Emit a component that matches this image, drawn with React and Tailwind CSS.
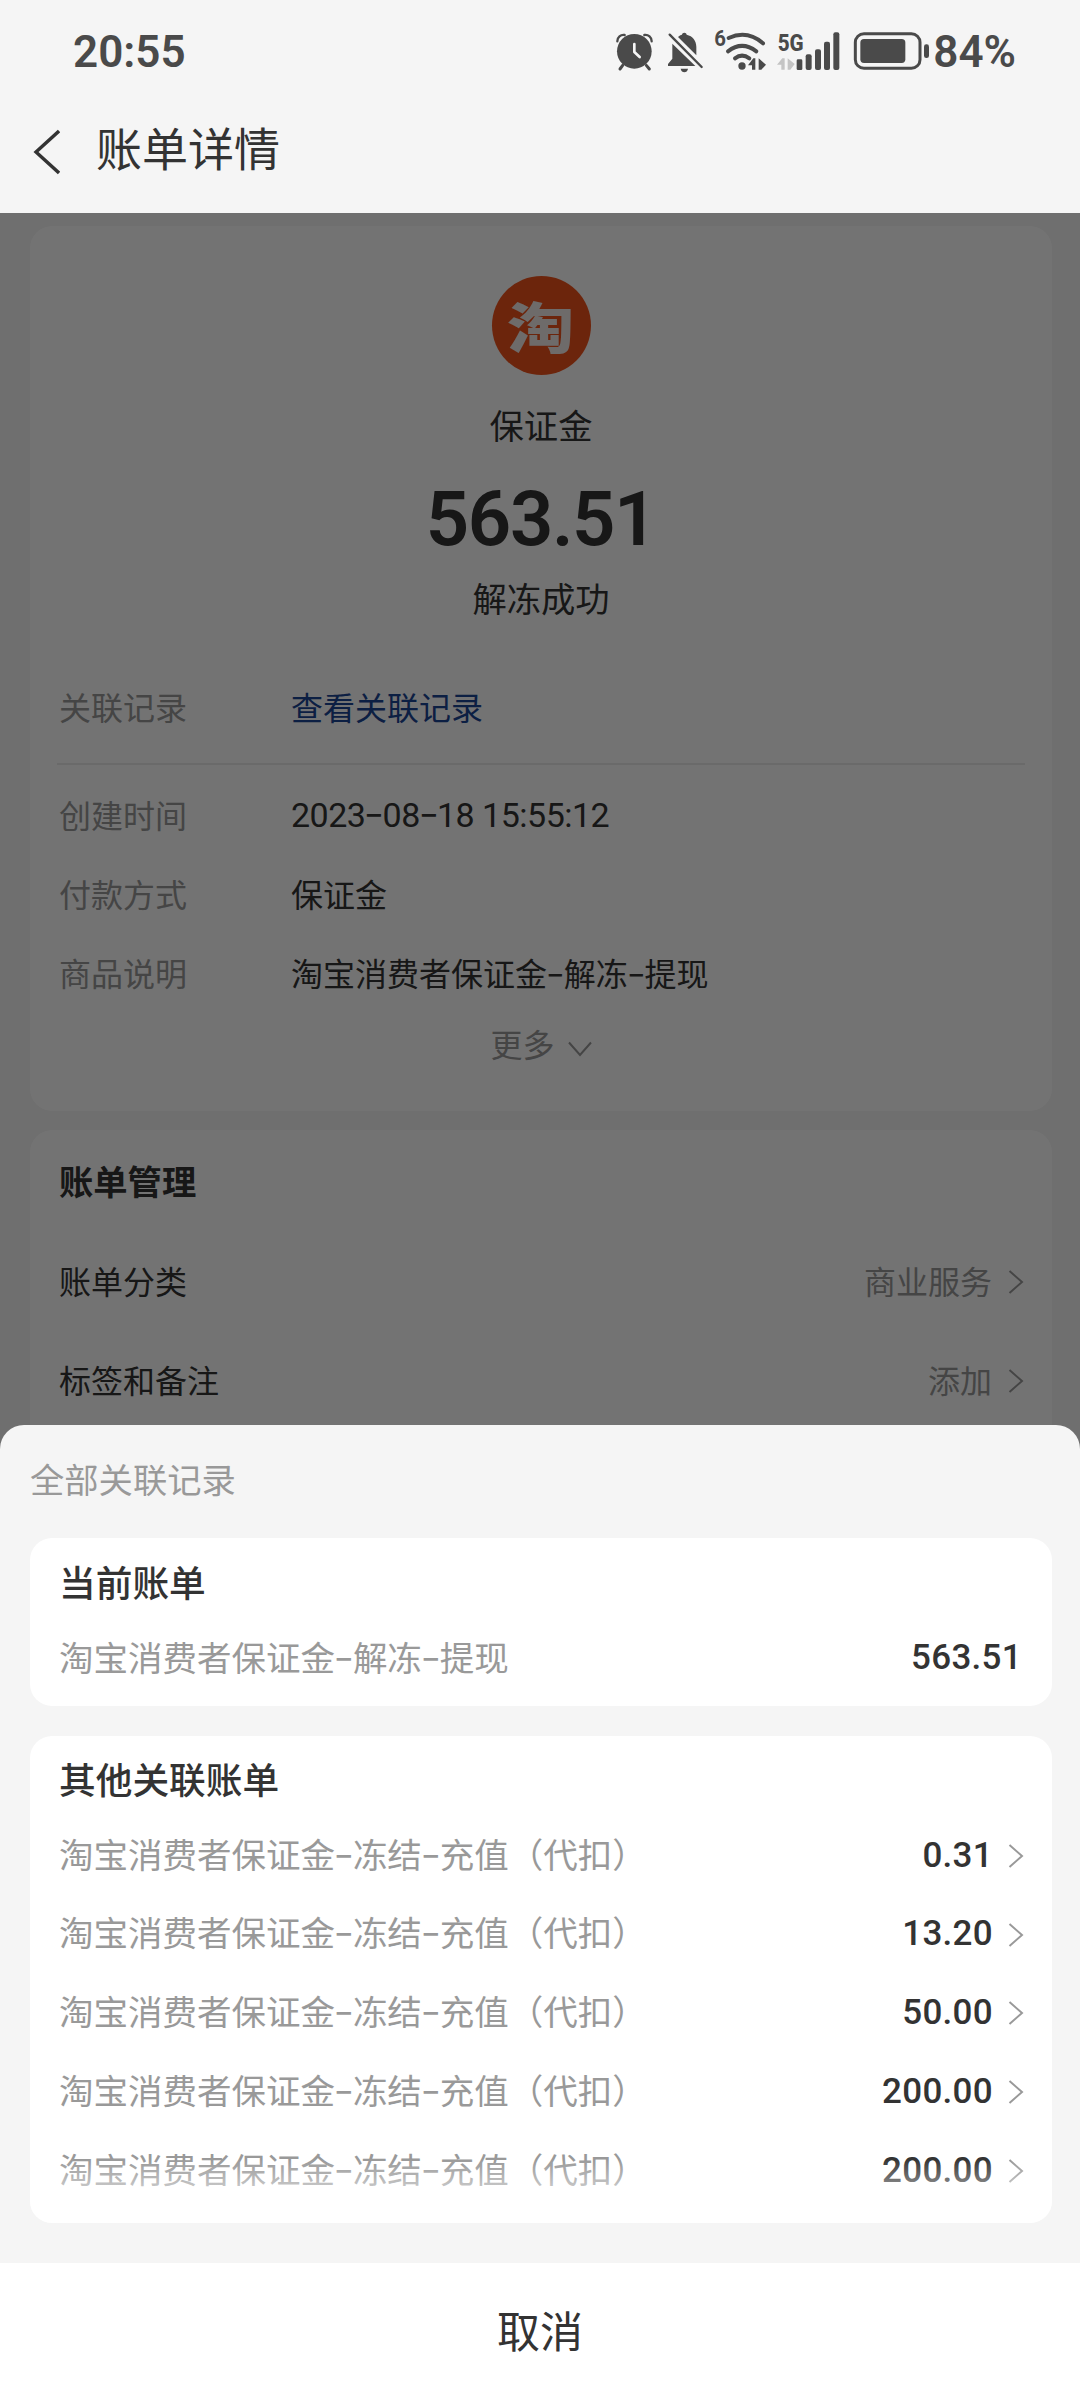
import React from 'react';

const detailRows = [
    { label: '创建时间', value: '2023-08-18 15:55:12', numeric: true },
    { label: '付款方式', value: '保证金' },
    { label: '商品说明', value: '淘宝消费者保证金-解冻-提现' }
];

const manageRows = [
    { label: '账单分类', value: '商业服务' },
    { label: '标签和备注', value: '添加' }
];

const relatedBills = ['0.31', '13.20', '50.00', '200.00', '200.00'];

// Hyphens are set in a wider face so they do not look cramped between CJK characters
const Dashed = ({ text }) => (
    <>
        {text.split('-').map((part, i) => (
            <React.Fragment key={i}>
                {i > 0 && <span className="inline-block font-['Inter'] px-px leading-none scale-x-130 -translate-y-px">-</span>}
                {part}
            </React.Fragment>
        ))}
    </>
);

const ArrowRight = () => (
    <svg className="w-[16px] h-[24px] text-[#999999]" viewBox="0 0 16 24" fill="none" stroke="currentColor" strokeWidth="2">
        <path d="M1.5 1L14 12L1.5 23" />
    </svg>
);

const AlarmIcon = () => (
    <svg className="w-[40px] h-[45px]" viewBox="45 85 120 135">
        <circle cx="103" cy="152" r="52" fill="currentColor" />
        <g fill="none" stroke="currentColor" strokeLinecap="round">
            <path d="M52 122C52 110 62 101 74 103" strokeWidth="7" />
            <path d="M155 122C155 110 145 101 133 103" strokeWidth="7" />
            <path d="M68 194L60 205M139 194L148 205" strokeWidth="9" />
        </g>
        <path d="M103 130V154L119 169" fill="none" stroke="#f5f5f5" strokeWidth="8" strokeLinecap="round" strokeLinejoin="round" />
    </svg>
);

const BellOffIcon = () => (
    <svg className="w-[40px] h-[45px]" viewBox="195 85 120 135">
        <g fill="currentColor">
            <path d="M246 102C246 94 260 94 260 102C278 106 289 120 289 138V164L234 109C238 105 242 103 246 102Z" />
            <path d="M217 129L286 196H204V190L217 174Z" />
            <path d="M242 204H264C262 218 244 218 242 204Z" />
        </g>
        <path d="M209 102L305 199" stroke="currentColor" strokeWidth="7" strokeLinecap="round" />
    </svg>
);

const WifiIcon = () => (
    <svg className="w-[53px] h-[45px] overflow-visible" viewBox="342 85 159 135">
        <text x="343" y="137" fontFamily="Roboto" fontWeight="700" fontSize="64" fill="currentColor" textLength="35" lengthAdjust="spacingAndGlyphs">6</text>
        <g fill="none" stroke="currentColor" strokeWidth="12" strokeLinecap="round">
            <path d="M386 112Q442 87 489 128" />
            <path d="M384 152Q426 119 469 152" />
            <path d="M405 173Q426 157 448 173" />
        </g>
        <circle cx="426" cy="196" r="11" fill="currentColor" />
        <path d="M444 194L460 173H466V207H456V194ZM476 173L498 192L484 207H476Z" fill="currentColor" />
    </svg>
);

const SignalIcon = () => (
    <svg className="w-[65px] h-[45px] overflow-visible" viewBox="525 85 195 135">
        <text x="530" y="150" fontFamily="Roboto" fontWeight="800" fontSize="74" fill="currentColor" textLength="78" lengthAdjust="spacingAndGlyphs">5G</text>
        <path d="M528 192L544 173H551V207H541V192ZM560 173L581 190L568 207H560Z" fill="#c4c4c4" />
        <g fill="currentColor">
            <rect x="587" y="176" width="17" height="32" rx="4" />
            <rect x="614" y="161" width="18" height="47" rx="6" />
            <rect x="642" y="146" width="18" height="62" rx="6" />
            <rect x="669" y="123" width="18" height="85" rx="6" />
            <rect x="697" y="95" width="18" height="113" rx="6" />
        </g>
    </svg>
);

const BatteryIcon = () => (
    <svg className="w-[78px] h-[45px]" viewBox="756 85 234 135">
        <rect x="766" y="99" width="194" height="104" rx="26" fill="none" stroke="currentColor" strokeWidth="9" />
        <rect x="781" y="115" width="135" height="72" rx="11" fill="currentColor" />
        <rect x="972" y="131" width="15" height="41" rx="7" fill="currentColor" />
    </svg>
);

const App = () => {
    return (
        <div className="relative w-[1080px] h-[2400px] overflow-hidden bg-[#f5f5f5] text-[#333333] font-['Noto_Sans_CJK_SC',sans-serif]">
            <header className="h-[213px]">
                <div className="flex items-center justify-between h-[102px] pl-[73px] pr-[64px] font-['Roboto'] font-semibold text-[44px] text-[#4a4a4a]">
                    <span className="pt-px">20:55</span>
                    <div className="flex items-center">
                        <div className="flex items-center mr-[3px]">
                            <AlarmIcon />
                            <div className="flex items-center gap-[9px] ml-[10px]">
                                <BellOffIcon />
                                <WifiIcon />
                                <SignalIcon />
                            </div>
                            <div className="ml-[11px]">
                                <BatteryIcon />
                            </div>
                        </div>
                        <span className="pt-px">84%</span>
                    </div>
                </div>
                <div className="flex items-center h-[96px] pl-[32px]">
                    <svg className="w-[28px] h-[46px] mt-[3px]" viewBox="0 0 28 46" fill="none" stroke="currentColor" strokeWidth="3.4">
                        <path d="M27 2L4 23L27 44" />
                    </svg>
                    <h1 className="ml-[36px] mb-[8px] text-[46px] leading-none">账单详情</h1>
                </div>
            </header>

            <main className="px-[30px] pt-[13px]">
                <section className="w-[1022px] h-[885px] bg-white rounded-[22px] pt-[50px] px-[29px]">
                    <div className="flex flex-col items-center">
                        <div className="flex items-center justify-center w-[99px] h-[99px] rounded-full bg-[#f0531c] text-[#f3eeec]">
                            <span className="mb-[3px] text-[55px] leading-none font-black scale-x-122">淘</span>
                        </div>
                        <p className="mt-[24px] text-[34.3px] leading-[50px]">保证金</p>
                        <p className="mt-[30px] font-['Roboto'] font-semibold text-[76px] leading-[80px] tracking-[-1.4px]">563.51</p>
                        <p className="mt-[13px] text-[34.3px] leading-[50px]">解冻成功</p>
                    </div>

                    <div className="flex items-center h-[64px] mt-[52px] text-[32px]">
                        <span className="w-[232px] text-[#999999]">关联记录</span>
                        <span className="text-[#1c4594]">查看关联记录</span>
                    </div>
                    <div className="h-[2px] mt-[25px] -mx-[2px] bg-[#eaeaea]" />

                    <div className="mt-[9px] text-[32px]">
                        {detailRows.map((row) => (
                            <div key={row.label} className="flex items-center h-[79px]">
                                <span className="w-[232px] text-[#999999]">{row.label}</span>
                                {row.numeric ? (
                                    <span className="mt-[3px] font-['Roboto'] text-[34px] tracking-[-0.5px]"><Dashed text={row.value} /></span>
                                ) : (
                                    <span><Dashed text={row.value} /></span>
                                )}
                            </div>
                        ))}
                    </div>

                    <div className="flex items-center justify-center h-[63px] gap-[13px] text-[32px] text-[#999999]">
                        <span>更多</span>
                        <svg className="w-[24px] h-[16px] mt-[13px]" viewBox="0 0 24 16" fill="none" stroke="currentColor" strokeWidth="2">
                            <path d="M1 1.5L12 14L23 1.5" />
                        </svg>
                    </div>
                </section>

                <section className="w-[1022px] h-[400px] mt-[19px] bg-white rounded-[22px] pt-[11px] pl-[29px] pr-[28px]">
                    <h2 className="flex items-center h-[80px] text-[34.3px] font-bold">账单管理</h2>
                    {manageRows.map((row) => (
                        <div key={row.label} className="flex items-center justify-between h-[99px] first-of-type:mt-[9px] text-[32px]">
                            <span>{row.label}</span>
                            <div className="flex items-center gap-[16px] text-[#999999]">
                                <span>{row.value}</span>
                                <span className="pt-[5px]"><ArrowRight /></span>
                            </div>
                        </div>
                    ))}
                </section>
            </main>

            {/* Backdrop leaves the title bar visible */}
            <div className="absolute inset-x-0 top-[213px] bottom-0 bg-black/55" />

            <div className="absolute inset-x-0 bottom-0 h-[975px] flex flex-col bg-[#f5f5f5] rounded-t-[24px] overflow-hidden">
                <h3 className="flex items-center h-[113px] pl-[30px] pb-[6px] text-[34.3px] text-[#999999]">全部关联记录</h3>

                <section className="w-[1022px] h-[168px] ml-[30px] bg-white rounded-[22px] pt-[6px] pl-[29px] pr-[28px]">
                    <h4 className="flex items-center h-[75px] text-[36.7px] font-medium">当前账单</h4>
                    <div className="flex items-center justify-between h-[75px]">
                        <span className="text-[34.5px] text-[#999999]"><Dashed text="淘宝消费者保证金-解冻-提现" /></span>
                        <span className="mt-[4px] mr-[2px] font-['Roboto'] font-medium text-[35px] tracking-[0.3px]">563.51</span>
                    </div>
                </section>

                <section className="relative w-[1022px] h-[487px] mt-[30px] ml-[30px] bg-white rounded-[22px] pt-[7px] pl-[29px] pr-[28px] overflow-hidden">
                    <h4 className="flex items-center h-[71px] text-[36.7px] font-medium">其他关联账单</h4>
                    {relatedBills.map((amount, i) => (
                        <div key={i} className="flex items-center justify-between h-[78.75px]">
                            <span className="text-[34.5px] text-[#999999]"><Dashed text="淘宝消费者保证金-冻结-充值（代扣）" /></span>
                            <div className="flex items-center gap-[15px] pt-[5px]">
                                <span className="font-['Roboto'] font-medium text-[35px] tracking-[0.3px]">{amount}</span>
                                <ArrowRight />
                            </div>
                        </div>
                    ))}
                    <div className="absolute inset-x-0 bottom-0 h-[64px] bg-linear-to-b from-white/0 to-white" />
                </section>

                <button className="mt-auto h-[137px] w-full pb-[5px] bg-white text-[43px]">取消</button>
            </div>
        </div>
    );
};

export default App;
